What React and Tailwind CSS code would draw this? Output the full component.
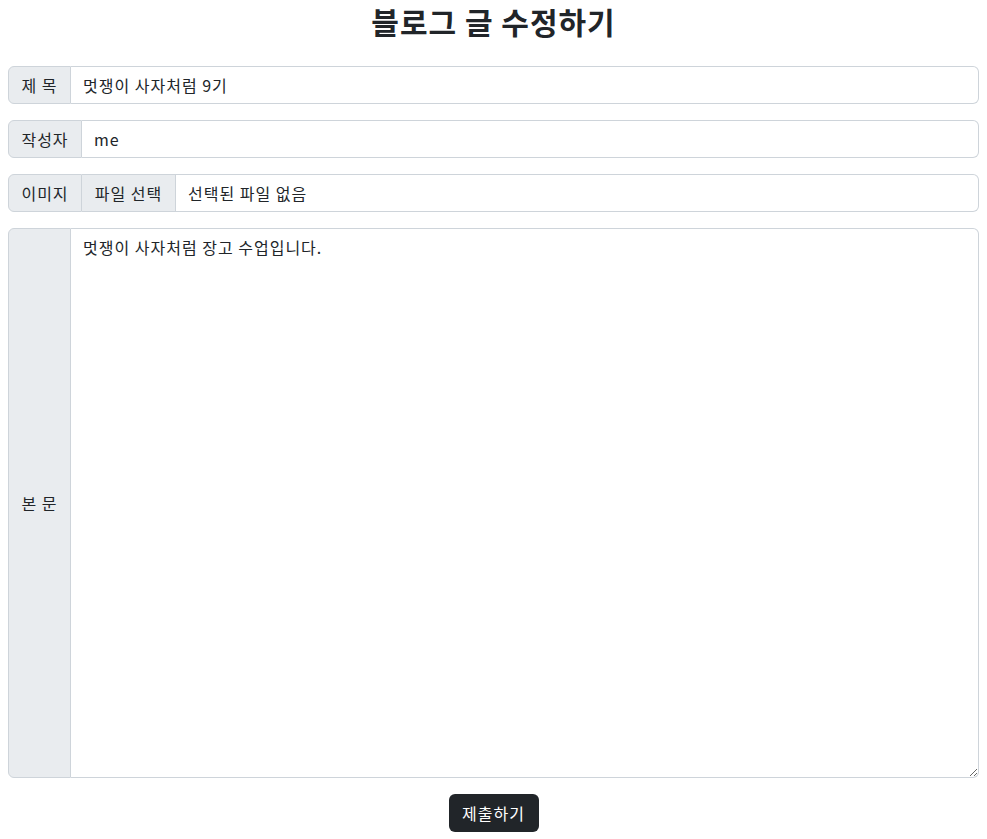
const App = () => {
  return (
    <div className="min-h-screen bg-white px-2 text-[16px] tracking-[1px] text-[#212529] font-['Noto_Sans_CJK_KR','Noto_Sans',sans-serif]">
      {/* Title */}
      <h2 className="pt-1 text-center text-[30px] font-bold leading-[34px] mb-[28px]">
        블로그 글 수정하기
      </h2>

      <form className="flex flex-col gap-4">
        {/* 제목 */}
        <div className="flex h-[38px]">
          <span className="flex w-[63px] items-center justify-center rounded-l-md border border-[#ced4da] bg-[#e9ecef]">
            제&nbsp;목
          </span>
          <input
            type="text"
            defaultValue="멋쟁이 사자처럼 9기"
            className="flex-1 rounded-r-md border border-l-0 border-[#ced4da] px-3 outline-none"
          />
        </div>

        {/* 작성자 */}
        <div className="flex h-[38px]">
          <span className="flex w-[74px] items-center justify-center rounded-l-md border border-[#ced4da] bg-[#e9ecef]">
            작성자
          </span>
          <input
            type="text"
            defaultValue="me"
            className="flex-1 rounded-r-md border border-l-0 border-[#ced4da] px-3 outline-none"
          />
        </div>

        {/* 이미지 */}
        <div className="flex h-[38px]">
          <span className="flex w-[74px] items-center justify-center rounded-l-md border border-[#ced4da] bg-[#e9ecef]">
            이미지
          </span>
          <div className="flex flex-1 items-center rounded-r-md border border-l-0 border-[#ced4da]">
            <span className="flex h-full w-[94px] items-center justify-center border-r border-[#ced4da] bg-[#e9ecef]">
              파일 선택
            </span>
            <span className="px-3">선택된 파일 없음</span>
          </div>
        </div>

        {/* 본문 */}
        <div className="flex h-[550px]">
          <span className="flex w-[63px] items-center justify-center rounded-l-md border border-[#ced4da] bg-[#e9ecef]">
            본&nbsp;문
          </span>
          <textarea
            defaultValue="멋쟁이 사자처럼 장고 수업입니다."
            className="flex-1 resize-y rounded-r-md border border-l-0 border-[#ced4da] px-3 py-[6px] leading-6 outline-none"
          />
        </div>

        <div className="flex justify-center">
          <button
            type="button"
            className="h-[38px] w-[90px] rounded-md bg-[#212529] text-white"
          >
            제출하기
          </button>
        </div>
      </form>
    </div>
  );
};

export default App;
